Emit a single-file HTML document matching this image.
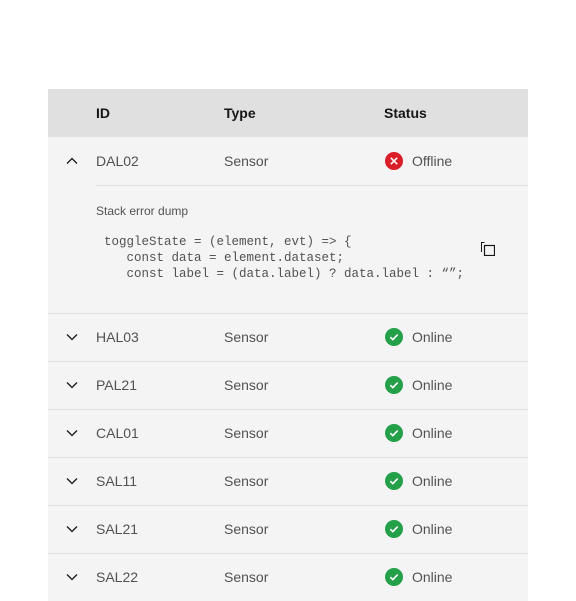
<!DOCTYPE html>
<html><head><style>
*{margin:0;padding:0;box-sizing:border-box}
body{width:576px;height:577px;background:#fff;font-family:"Liberation Sans",sans-serif;overflow:hidden;position:relative}
.t{position:absolute;left:48px;top:89px;width:480px;background:#f4f4f4}
.h{height:48px;background:#e0e0e0;position:relative;font-weight:bold;font-size:14px;color:#161616}
.r{height:48px;position:relative;border-top:1px solid #e0e0e0;font-size:14px;color:#525252}
.c{position:absolute;top:0;line-height:46px}
.h .c,.f .c{line-height:48px}
.ch{position:absolute;left:18px;top:17px}
.ic{position:absolute;left:337px;top:14px}
.f .ic{top:15px}.f .ch{top:18px}
</style></head><body>
<div class="t">
<div class="h"><span class="c" style="left:48px">ID</span><span class="c" style="left:176px">Type</span><span class="c" style="left:336px">Status</span></div>
<div class="r f" style="border-top:none">
<svg class="ch" width="12" height="12" viewBox="0 0 12 12"><path d="M1 8.5L6 3.5L11 8.5" fill="none" stroke="#161616" stroke-width="1.3"/></svg>
<span class="c" style="left:48px">DAL02</span><span class="c" style="left:176px">Sensor</span>
<svg class="ic" width="18" height="18" viewBox="0 0 18 18"><circle cx="9" cy="9" r="9" fill="#da1e28"/><path d="M5.8 5.8L12.2 12.2M12.2 5.8L5.8 12.2" stroke="#fff" stroke-width="1.6"/></svg>
<span class="c" style="left:364px">Offline</span>
</div>
<div style="height:128px;position:relative;margin-left:48px;border-top:1px solid #e0e0e0">
<div style="position:absolute;left:0;top:18px;font-size:12px;color:#525252">Stack error dump</div>
<pre style="position:absolute;left:8px;top:48px;font-family:'Liberation Mono',monospace;font-size:12.5px;line-height:16px;color:#525252">toggleState = (element, evt) =&gt; {
   const data = element.dataset;
   const label = (data.label) ? data.label : “”;</pre>
<svg style="position:absolute;left:385px;top:56px" width="14" height="14" viewBox="0 0 14 14"><path d="M3.5 0.5H0.5V10" fill="none" stroke="#161616" stroke-width="1"/><rect x="3.5" y="3.5" width="10" height="10" fill="none" stroke="#161616" stroke-width="1.2"/></svg>
</div>
<div id="rows"></div>
</div>
<script>
var ids=["HAL03","PAL21","CAL01","SAL11","SAL21","SAL22"],h="";
ids.forEach(function(i){h+='<div class="r"><svg class="ch" width="12" height="12" viewBox="0 0 12 12"><path d="M1 3.5L6 8.5L11 3.5" fill="none" stroke="#161616" stroke-width="1.3"/></svg><span class="c" style="left:48px">'+i+'</span><span class="c" style="left:176px">Sensor</span><svg class="ic" width="18" height="18" viewBox="0 0 18 18"><circle cx="9" cy="9" r="9" fill="#24a148"/><path d="M5.3 9.2L7.8 11.6L12.7 6.6" fill="none" stroke="#fff" stroke-width="1.6"/></svg><span class="c" style="left:364px">Online</span></div>'});
document.getElementById("rows").innerHTML=h;
</script>
</body></html>
